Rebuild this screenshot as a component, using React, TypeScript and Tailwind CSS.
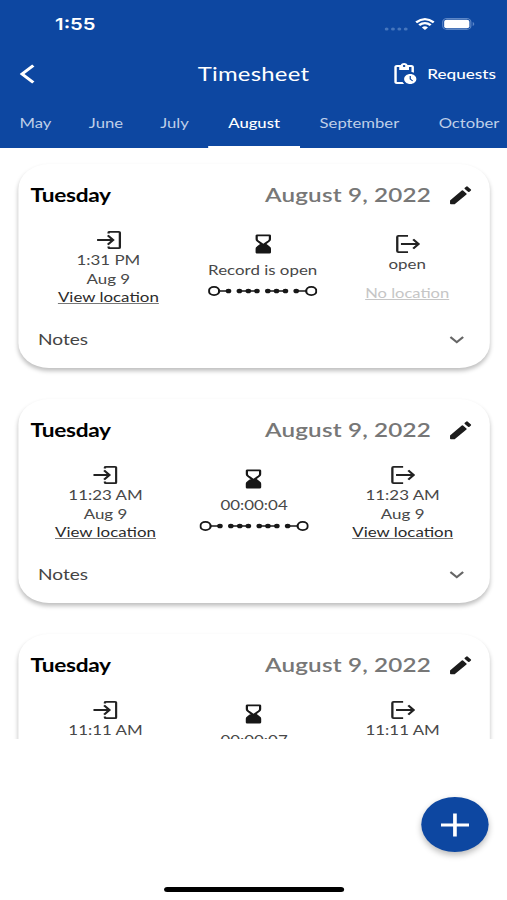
import type { ReactNode } from 'react';
import { MdOutlinePendingActions } from 'react-icons/md';

interface Punch {
  time: string;
  date?: string;
  location: string;
}

interface Entry {
  start: Punch;
  end: Punch;
  duration: string;
}

const months = [
  { name: 'May', width: 'w-[58px]' },
  { name: 'June', width: 'w-[57px]' },
  { name: 'July', width: 'w-[55px]' },
  { name: 'August', width: 'w-[75px]' },
  { name: 'September', width: 'w-[97px]' },
  { name: 'October', width: 'w-[82px]' },
];

const entries: Entry[] = [
  {
    start: { time: '1:31 PM', date: 'Aug 9', location: 'View location' },
    end: { time: 'open', location: 'No location' },
    duration: 'Record is open',
  },
  {
    start: { time: '11:23 AM', date: 'Aug 9', location: 'View location' },
    end: { time: '11:23 AM', date: 'Aug 9', location: 'View location' },
    duration: '00:00:04',
  },
  {
    start: { time: '11:11 AM', date: 'Aug 9', location: 'View location' },
    end: { time: '11:11 AM', date: 'Aug 9', location: 'View location' },
    duration: '00:00:07',
  },
];

function LoginIcon() {
  return (
    <svg width="20" height="20" viewBox="0 0 20 20" fill="none" stroke="#222" strokeWidth="1.9">
      <path d="M9.7 3.6V2.6Q9.7 1.9 10.5 1.9H18Q18.9 1.9 18.9 2.8V17.2Q18.9 18.1 18 18.1H10.5Q9.7 18.1 9.7 17.4V16.4" />
      <path d="M0.3 10H13M9 5.4L13.4 10L9 14.6" />
    </svg>
  );
}

function LogoutIcon() {
  return (
    <svg width="20" height="20" viewBox="0 0 20 20" fill="none" stroke="#222" strokeWidth="1.9">
      <path d="M10.2 1.9H2.4Q1.4 1.9 1.4 2.9V17.1Q1.4 18.1 2.4 18.1H10.2" />
      <path d="M4.4 10H18.6M14.4 5.4L18.8 10L14.4 14.6" />
    </svg>
  );
}

function HourglassIcon() {
  return (
    <svg width="14" height="20" viewBox="0 0 14 20">
      <path
        d="M2 1.2H12Q12.6 1.2 12.6 1.8V5.2Q12.6 6.3 11.8 7L8.6 10L11.8 13Q12.6 13.7 12.6 14.8V18.2Q12.6 18.8 12 18.8H2Q1.4 18.8 1.4 18.2V14.8Q1.4 13.7 2.2 13L5.4 10L2.2 7Q1.4 6.3 1.4 5.2V1.8Q1.4 1.2 2 1.2Z"
        fill="#171717"
        stroke="#171717"
        strokeWidth="1.4"
      />
      <path d="M2.5 2.3H11.5V5Q11.5 5.7 11 6.2L7 9.8L3 6.2Q2.5 5.7 2.5 5Z" fill="#fff" />
    </svg>
  );
}

function PencilIcon() {
  return (
    <svg width="18" height="19" viewBox="0 0 18 19" fill="#1c1c1c" stroke="#1c1c1c" strokeLinejoin="round">
      <path d="M1.2 14.8L10.6 5.1L13.4 8L4 17.6H1.2Z" strokeWidth="1.4" />
      <path d="M13.1 2.4L14.4 1.2L17 4L15.8 5.2Z" strokeWidth="1.6" />
    </svg>
  );
}

function DotTrail() {
  return (
    <svg width="89" height="12" viewBox="0 0 89 12" fill="#171717" stroke="#171717">
      <g fill="none" strokeWidth="1.8">
        <circle cx="4.8" cy="6" r="4.2" />
        <circle cx="84.2" cy="6" r="4.2" />
        <path d="M9 6H16.6M25.5 6H39.8M48.7 6H63.1M71.9 6H80" strokeWidth="1.3" />
      </g>
      <g stroke="none">
        {[16.6, 25.5, 32.8, 39.8, 48.7, 55.8, 63.1, 71.9].map((x) => (
          <circle key={x} cx={x} cy="6" r="2.3" />
        ))}
      </g>
    </svg>
  );
}

function PunchColumn({ punch, icon }: { punch: Punch; icon: ReactNode }) {
  if (!punch.date) {
    return (
      <div className="flex w-[69px] flex-col items-center pt-[3.5px] pr-[2px]">
        {icon}
        <span className="mt-[1px]">{punch.time}</span>
        <span className="mt-[10.5px] text-[13.5px] text-[#c6c6c6] underline decoration-1 underline-offset-1">
          {punch.location}
        </span>
      </div>
    );
  }
  return (
    <div className="flex w-[83px] flex-col items-center">
      {icon}
      <span className="mt-[1px]">{punch.time}</span>
      <span>{punch.date}</span>
      <span className="text-[#2b2b2b] underline decoration-[#777] decoration-1 underline-offset-1">{punch.location}</span>
    </div>
  );
}

function EntryCard({ entry }: { entry: Entry }) {
  return (
    <div className="flex h-[204px] shrink-0 flex-col rounded-[25px] bg-white shadow-[0_3px_4px_rgba(0,0,0,0.25)]">
      <div className="flex h-[62px] items-center pr-[15px] pl-[10px]">
        <span className="pt-[2px] text-[18.5px] font-bold tracking-[-0.25px] text-black">Tuesday</span>
        <span className="ml-auto text-[19.8px] font-semibold tracking-[0.15px] text-[#777]">August 9, 2022</span>
        <div className="ml-[15px]">
          <PencilIcon />
        </div>
      </div>
      <div className="flex h-[96px] justify-around px-3 pt-[4px] text-[13.8px] leading-[18.5px] whitespace-nowrap text-[#484848]">
        <PunchColumn punch={entry.start} icon={<LoginIcon />} />
        <div className="flex w-[89px] flex-col items-center pt-1">
          <HourglassIcon />
          <span className="mt-[7px]">{entry.duration}</span>
          <div className="mt-[5px]">
            <DotTrail />
          </div>
        </div>
        <PunchColumn punch={entry.end} icon={<LogoutIcon />} />
      </div>
      <div className="flex h-[34px] items-center justify-between pr-[21.5px] pl-4">
        <span className="pt-[2px] text-[15.6px] text-[#444]">Notes</span>
        <svg width="12" height="8" viewBox="0 0 12 8" fill="none" stroke="#666" strokeWidth="1.8" className="mt-[2px]">
          <path d="M0.8 1L6 6.2L11.2 1" />
        </svg>
      </div>
    </div>
  );
}

function StatusBar() {
  return (
    <div className="flex h-12 items-center justify-between pr-[26px] pl-[45px]">
      <span className="pt-[1px] font-['Inter',sans-serif] text-[16.5px] font-semibold">1:55</span>
      <div className="flex items-center">
        <svg width="20" height="4" viewBox="0 0 20 4" className="mt-[9px]" fill="#4676bd">
          <circle cx="1.7" cy="2" r="1.6" />
          <circle cx="6.9" cy="2" r="1.6" />
          <circle cx="12.1" cy="2" r="1.6" />
          <circle cx="17.3" cy="2" r="1.6" />
        </svg>
        <svg width="16" height="12" viewBox="0 0 16 12" className="mr-[1px] ml-[5px]" fill="none" stroke="#fff" strokeWidth="2.2">
          <path d="M0.8 4.4Q8 -2 15.2 4.4" />
          <path d="M3.3 7.1Q8 3 12.7 7.1" />
          <path d="M8 12L5.5 9.4Q8 7.3 10.5 9.4Z" fill="#fff" stroke="none" />
        </svg>
        <svg width="27" height="12" viewBox="0 0 27 12" className="ml-[5px]">
          <rect x="0.5" y="0.5" width="23" height="11" rx="3.4" fill="none" stroke="#5c86c6" />
          <rect x="1.7" y="1.7" width="20.6" height="8.6" rx="2" fill="#fff" />
          <path d="M25 4V8Q26.3 7.4 26.3 6Q26.3 4.6 25 4Z" fill="#5c86c6" />
        </svg>
      </div>
    </div>
  );
}

function Header() {
  return (
    <header className="flex h-[148px] shrink-0 flex-col bg-[#0d47a1] text-white">
      <StatusBar />
      <div className="grid h-[52px] grid-cols-[1fr_auto_1fr] items-center pr-[9px] pl-4">
        <svg width="13" height="20" viewBox="0 0 13 20" fill="none" stroke="#fff" strokeWidth="2.7">
          <path d="M11.2 1.4L2 10L11.2 18.6" />
        </svg>
        <h1 className="pr-[7px] text-center text-[19.5px] tracking-[0.2px]">Timesheet</h1>
        <div className="flex items-center justify-end">
          <MdOutlinePendingActions className="size-[24px]" />
          <span className="ml-[7px] pb-[1px] text-[14px] font-medium">Requests</span>
        </div>
      </div>
      <nav className="flex h-12 overflow-hidden text-[13.6px]">
        {months.map((month) => (
          <div
            key={month.name}
            className={`flex shrink-0 items-center justify-center border-b-[2.5px] pt-[1px] ${month.width} ${
              month.name === 'August' ? 'border-white font-medium text-white' : 'border-transparent text-[#bfcfe8]'
            }`}
          >
            {month.name}
          </div>
        ))}
      </nav>
    </header>
  );
}

export default function App() {
  return (
    <div className="h-[900px] w-[507px] overflow-hidden bg-white">
      {/* 414pt phone canvas widened to the full viewport */}
      <div className="relative flex h-[900px] w-[414px] origin-top-left scale-x-[1.2246] flex-col bg-white font-['Lato',sans-serif]">
        <Header />
        <main className="flex h-[591px] flex-col gap-[31px] overflow-hidden pt-4 pr-[14px] pl-[15px]">
          {entries.map((entry) => (
            <EntryCard key={entry.start.time} entry={entry} />
          ))}
        </main>
        <button className="absolute right-[15px] bottom-[48px] flex size-[55px] items-center justify-center rounded-full bg-[#0d47a1] shadow-[0_3px_6px_rgba(0,0,0,0.28)]">
          <svg width="23" height="24" viewBox="0 0 23 24" stroke="#fff" strokeWidth="3">
            <path d="M11.5 0.5V23.5M0 12H23" />
          </svg>
        </button>
        <div className="absolute bottom-2 left-[134px] h-[5px] w-[147px] rounded-full bg-black" />
      </div>
    </div>
  );
}
